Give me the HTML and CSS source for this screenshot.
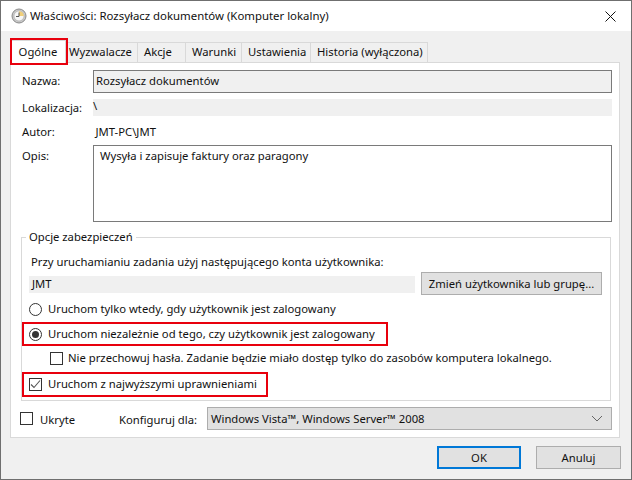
FILE: index.html
```html
<!DOCTYPE html>
<html lang="pl">
<head>
<meta charset="utf-8">
<title>Właściwości</title>
<link rel="stylesheet" href="styles.css">
</head>
<body>
<div class="window">
  <header class="titlebar">
    <svg class="clock" width="16" height="16" viewBox="0 0 16 16"><circle cx="8" cy="8" r="7" fill="#c9c9c9" stroke="#8a8a8a"/><circle cx="8" cy="8" r="5" fill="#f7f7f7" stroke="#a8a8a8" stroke-width=".6"/><path d="M8 3.2A4.8 4.8 0 0 1 12.8 8H8Z" fill="#f0cf7a"/><path d="M8 4.5V8.5H5" fill="none" stroke="#555" stroke-width="1"/></svg>
    <span class="title">Właściwości: Rozsyłacz dokumentów (Komputer lokalny)</span>
    <svg class="close" width="11" height="11" viewBox="0 0 11 11"><path d="M.5.5l10 10M10.5.5l-10 10" stroke="#111" fill="none"/></svg>
  </header>
  <div class="client">
    <nav class="tabs">
      <span class="tab active">Ogólne<i class="mark mark-tab"></i></span>
      <span class="tab t2">Wyzwalacze</span>
      <span class="tab t3">Akcje</span>
      <span class="tab t4">Warunki</span>
      <span class="tab t5">Ustawienia</span>
      <span class="tab t6">Historia (wyłączona)</span>
    </nav>
    <section class="panel">
      <div class="row r-name"><label class="lbl">Nazwa:</label><div class="field boxed">Rozsyłacz dokumentów</div></div>
      <div class="row r-loc"><label class="lbl">Lokalizacja:</label><div class="field plain">\</div></div>
      <div class="row r-author"><label class="lbl">Autor:</label><div class="value">JMT-PC\JMT</div></div>
      <div class="row r-desc"><label class="lbl">Opis:</label><div class="field area">Wysyła i zapisuje faktury oraz paragony</div></div>
      <fieldset class="group">
        <legend>Opcje zabezpieczeń</legend>
        <p class="account-label">Przy uruchamianiu zadania użyj następującego konta użytkownika:</p>
        <div class="account">
          <div class="account-name">JMT</div>
          <div class="btn change">Zmień użytkownika lub grupę...</div>
        </div>
        <div class="opt o1"><span class="radio"></span>Uruchom tylko wtedy, gdy użytkownik jest zalogowany</div>
        <div class="opt o2"><span class="radio on"></span>Uruchom niezależnie od tego, czy użytkownik jest zalogowany<i class="mark mark-run"></i></div>
        <div class="opt o3"><span class="check"></span>Nie przechowuj hasła. Zadanie będzie miało dostęp tylko do zasobów komputera lokalnego.</div>
        <div class="opt o4"><span class="check"><svg width="11" height="11" viewBox="0 0 11 11"><path d="M1 5.5l3 3 6-7" fill="none" stroke="#555" stroke-width="1.1"/></svg></span>Uruchom z najwyższymi uprawnieniami<i class="mark mark-high"></i></div>
      </fieldset>
      <div class="bottom">
        <span class="check"></span><span class="hidden-label">Ukryte</span>
        <span class="config-label">Konfiguruj dla:</span>
        <div class="select">Windows Vista™, Windows Server™ 2008<svg width="12" height="7" viewBox="0 0 12 7"><path d="M1 1l5 5 5-5" fill="none" stroke="#666"/></svg></div>
      </div>
    </section>
    <footer class="actions">
      <div class="btn ok">OK</div>
      <div class="btn cancel">Anuluj</div>
    </footer>
  </div>
</div>
</body>
</html>
```
FILE: styles.css
```css
* { box-sizing: border-box; }
html, body { margin: 0; padding: 0; }
body { font: 11.27px/16px "Noto Sans", "Open Sans", sans-serif; color: #111; background: #fff; }
.window { width: 632px; height: 480px; border: 1px solid #6f6f6f; display: flex; flex-direction: column; overflow: hidden; }
.titlebar { height: 30px; flex: none; background: #fff; display: flex; align-items: center; padding: 0 15px 0 10px; gap: 3px; }
.title { flex: 1; font-size: 11.4px; }
.client { flex: 1; background: #f0f0f0; padding: 0 10px 0 9px; display: flex; flex-direction: column; }
.tabs { display: flex; height: 31px; padding-top: 11px; align-items: flex-start; }
.tab { position: relative; height: 20px; padding: 1px 0 0 6px; background: #f0f0f0; border: 1px solid #d9d9d9; border-left: 0; border-bottom: 0; white-space: nowrap; }
.tab.active { width: 56px; height: 23px; margin-top: -2px; background: #fff; border-left: 1px solid #d9d9d9; padding: 3px 0 0; text-align: center; z-index: 1; }
.t2 { width: 72px; padding-left: 3px; }
.t3 { width: 48px; }
.t4 { width: 56px; }
.t5 { width: 69px; }
.t6 { width: 117px; }
.panel { height: 376px; margin-right: 1px; background: #fff; border: 1px solid #d9d9d9; padding: 7px 0 0 11px; }
.row { display: flex; }
.lbl { width: 71px; flex: none; padding-top: 3px; }
.field { width: 519px; }
.boxed { height: 23px; background: #f0f0f0; border: 1px solid #7a7a7a; padding: 2px 0 0 2px; }
.r-loc { margin-top: 6px; }
.r-loc .lbl { padding-top: 1px; }
.plain { height: 17px; background: #f0f0f0; line-height: 14px; padding-left: 0; }
.r-author { margin-top: 8px; height: 16px; }
.r-author .lbl { padding-top: 0; }
.r-desc .lbl { padding-top: 3px; }
.value { padding-left: 2.5px; }
.r-desc { margin-top: 5px; }
.area { height: 77px; background: #fff; border: 1px solid #7a7a7a; padding: 2px 0 0 6px; }
.group { position: relative; width: 590px; height: 172px; margin: 7px 0 0 -1px; padding: 0 0 0 7px; border: 1px solid #d9d9d9; min-width: 0; }
.group legend { margin-left: -3px; padding: 0 3px; line-height: 16px; height: 16px; }
.account-label { margin: 9px 0 0 2px; }
.account { display: flex; gap: 6px; margin-top: 2px; height: 23px; }
.account-name { width: 386px; height: 17px; margin-top: 4px; background: #f0f0f0; padding-left: 3px; line-height: 16px; }
.btn { background: #e1e1e1; border: 1px solid #adadad; display: flex; align-items: center; justify-content: center; height: 23px; }
.change { width: 181px; }
.opt { position: relative; display: flex; align-items: center; height: 16px; }
.o1 { margin-top: 6px; }
.o2 { margin-top: 9px; }
.o3 { margin-top: 8px; padding-left: 21px; }
.o3 .check { margin-right: 5px; }
.o4 { margin-top: 10px; }
.radio { width: 13px; height: 13px; border: 1px solid #333; border-radius: 50%; margin-right: 6px; background: #fff; flex: none; position: relative; }
.radio.on::after { content: ""; position: absolute; left: 2px; top: 2px; width: 7px; height: 7px; border-radius: 50%; background: #333; }
.check { width: 13px; height: 13px; border: 1px solid #333; background: #fff; margin-right: 6px; flex: none; display: flex; align-items: center; justify-content: center; }
.mark { position: absolute; border: 2px solid #e8000d; pointer-events: none; }
.mark-tab { left: -1px; top: -3px; width: 58px; height: 27px; }
.mark-run { left: -7px; top: -4px; width: 366px; height: 24px; }
.mark-high { left: -7px; top: -4px; width: 246px; height: 25px; }
.bottom { display: flex; align-items: center; height: 23px; margin-top: 6px; margin-left: -2px; }
.bottom .check { margin-right: 7px; }
.hidden-label { width: 79px; padding-top: 2px; }
.config-label { width: 88px; padding-top: 2px; }
.select { width: 405px; height: 23px; background: #e1e1e1; border: 1px solid #adadad; display: flex; align-items: center; justify-content: space-between; padding: 0 8px 0 3px; }
.actions { display: flex; gap: 15px; justify-content: flex-end; margin-top: 8px; }
.ok { width: 84px; border: 2px solid #0078d7; }
.cancel { width: 85px; }
```
